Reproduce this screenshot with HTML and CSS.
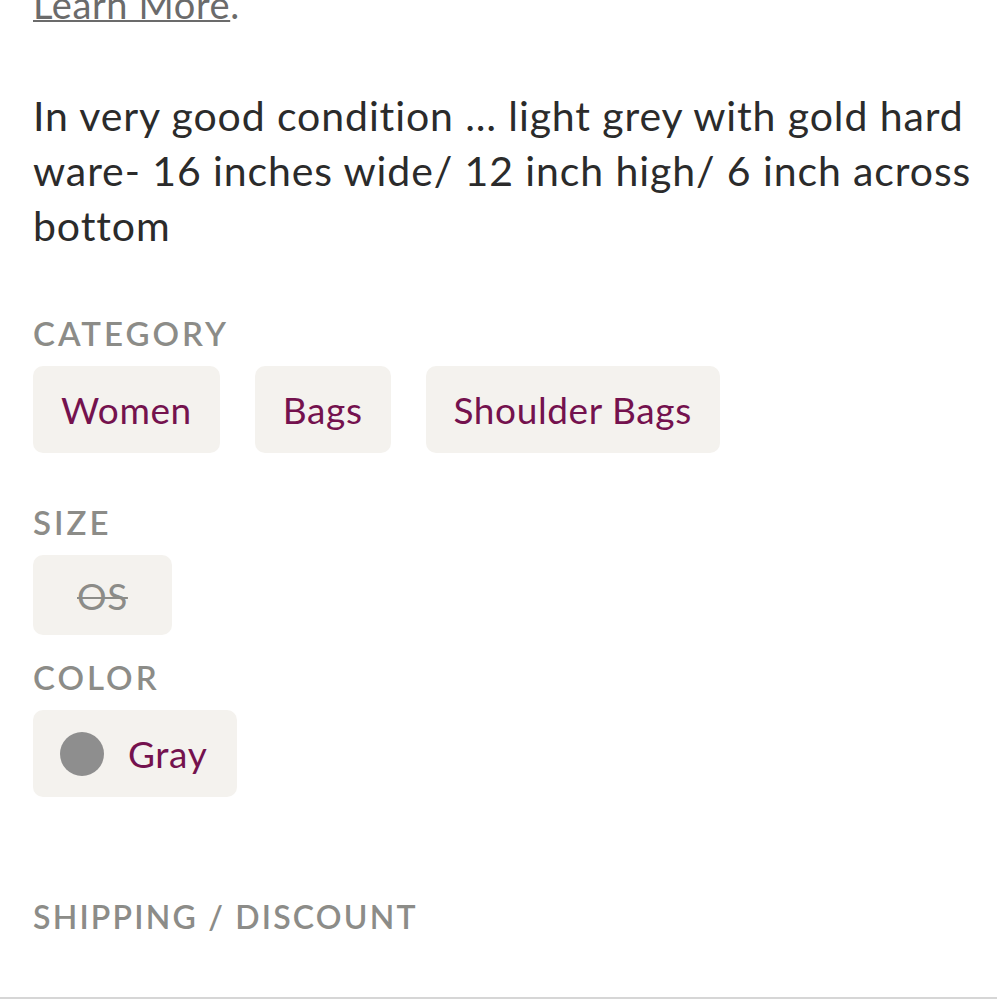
FILE: index.html
```html
<!DOCTYPE html>
<html lang="en">
<head>
  <meta charset="UTF-8">
  <title>Listing Details</title>
  <link rel="stylesheet" href="styles.css">
</head>
<body>

  <div class="listing">
    <p class="learn"><a href="#">Learn More</a>.</p>

    <p class="description">In very good condition … light grey with gold hard ware- 16 inches wide/ 12 inch high/ 6 inch across bottom</p>

    <!-- Category -->
    <h4 class="label">Category</h4>
    <div class="tags">
      <a class="tag" href="#">Women</a>
      <a class="tag" href="#">Bags</a>
      <a class="tag" href="#">Shoulder Bags</a>
    </div>

    <!-- Size -->
    <h4 class="label">Size</h4>
    <div class="tags">
      <span class="tag tag-size">OS</span>
    </div>

    <!-- Color -->
    <h4 class="label label-color">Color</h4>
    <div class="tags">
      <a class="tag tag-color" href="#"><span class="swatch"></span>Gray</a>
    </div>

    <h4 class="label label-shipping">Shipping / Discount</h4>
  </div>

  <div class="bottom-bar"></div>

</body>
</html>
```

FILE: styles.css
```css
body {
  margin: 0;
  font-family: Lato, "Open Sans", sans-serif;
  font-variant-ligatures: none;
  color: #2b2b2b;
  background: #fff;
  height: 1000px;
  overflow: hidden;
  position: relative;
}
.listing {
  padding-left: 33px;
  width: 940px;
}
.learn {
  margin: -18px 0 0;
  font-size: 38px;
  line-height: 44px;
  letter-spacing: 0.6px;
  color: #6b6b6b;
}
.learn a {
  color: #6b6b6b;
  text-decoration: underline;
  text-decoration-thickness: 2px;
}
.description {
  margin: 62px 0 0;
  font-size: 41px;
  line-height: 55px;
  letter-spacing: 0.9px;
  color: #2b2b2b;
}
.label {
  margin: 49px 0 0;
  font-size: 33px;
  font-weight: 600;
  letter-spacing: 3px;
  text-transform: uppercase;
  color: #8c8c88;
  line-height: 40px;
}
.label:first-of-type {
  margin-top: 60px;
}
.tags {
  display: flex;
  gap: 35px;
  margin-top: 13px;
}
.tag {
  display: flex;
  align-items: center;
  background: #f4f2ee;
  border-radius: 10px;
  padding: 0 28px;
  height: 87px;
  font-size: 37px;
  letter-spacing: 0.6px;
  color: #74124e;
  text-decoration: none;
}
.tag-size {
  height: 80px;
  padding: 0 44px;
  color: #8c8c88;
  text-decoration: line-through;
  text-decoration-thickness: 2px;
}
.tag-color {
  padding: 0 30px 0 27px;
  gap: 24px;
}
.swatch {
  width: 44px;
  height: 44px;
  border-radius: 50%;
  background: #8e8e8e;
}
.label-color {
  margin-top: 22px;
}
.label-shipping {
  margin-top: 100px;
  font-size: 32px;
  letter-spacing: 2.2px;
}
.bottom-bar {
  position: absolute;
  left: 0;
  right: 0;
  top: 997px;
  border-top: 2px solid #d6d6d6;
}
```
